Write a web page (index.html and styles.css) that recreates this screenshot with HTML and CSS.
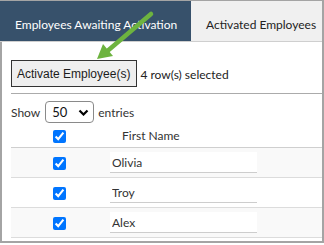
FILE: index.html
```html
<!DOCTYPE html>
<html>
  <head>
    <title>Employee Activation</title>
    <link rel="stylesheet" href="styles.css">
  </head>
  <body>
    <div class="frame">
      <div class="tabs">
        <div class="tab active">Employees Awaiting Activation</div>
        <div class="tab">Activated Employees</div>
      </div>
      <div class="panel">
        <div class="toolbar">
          <button class="btn">Activate Employee(s)</button>
          <span class="count">4 row(s) selected</span>
        </div>
        <div class="length">
          <span>Show</span>
          <div class="select-wrap">
            <select>
              <option>50</option>
            </select>
            <svg class="chevron" width="11" height="7" viewBox="0 0 11 7">
              <polyline points="1.5,1.5 5.5,5.5 9.5,1.5" fill="none" stroke="#000" stroke-width="2.2" />
            </svg>
          </div>
          <span>entries</span>
        </div>
        <table class="grid">
          <thead>
            <tr>
              <th class="check"><input type="checkbox" checked /></th>
              <th class="name">First Name</th>
            </tr>
          </thead>
          <tbody>
            <tr class="odd">
              <td class="check"><input type="checkbox" checked /></td>
              <td><input type="text" class="field" value="Olivia" /></td>
            </tr>
            <tr>
              <td class="check"><input type="checkbox" checked /></td>
              <td><input type="text" class="field" value="Troy" /></td>
            </tr>
            <tr class="odd">
              <td class="check"><input type="checkbox" checked /></td>
              <td><input type="text" class="field" value="Alex" /></td>
            </tr>
          </tbody>
        </table>
      </div>
      <svg class="arrow" width="324" height="70" viewBox="0 0 324 70">
        <line x1="149" y1="13" x2="106" y2="49.5" stroke="#6db33f" stroke-width="4.5" stroke-linecap="round" />
        <polygon points="95,58 111,55 101,43" fill="#6db33f" />
      </svg>
    </div>
  </body>
</html>
```

FILE: styles.css
```css
body{
    margin: 0;
    font-family: Lato, "Open Sans", sans-serif;
    font-size: 12px;
    color: #333;
}
.frame{
    position: relative;
    width: 320px;
    border: 2px solid #a4a4a4;
    border-top-width: 1px;
    padding-bottom: 3px;
}
.tabs{
    display: flex;
    height: 40px;
    margin-left: -2px;
    border-bottom: 1px solid #cfcfcf;
}
.tab{
    display: flex;
    align-items: center;
    padding: 6px 0 0 15px;
    box-sizing: border-box;
    background: #f0f0f0;
    color: #222;
    flex: 1;
}
.tab.active{
    flex: 0 0 191px;
    background: #37516b;
    color: #fff;
}
.panel{
    padding-left: 9px;
}
.toolbar{
    display: flex;
    align-items: center;
    gap: 3px;
    margin-top: 18px;
    padding-bottom: 6px;
    border-bottom: 1px solid #ababab;
}
.btn{
    height: 27px;
    padding: 0 6px 0 5px;
    font: 12px "Liberation Sans", Arial, sans-serif;
    color: #1c1c1c;
    background: #efefef;
    border: 1px solid #333;
    border-radius: 0;
}
.count{
    color: #222;
    padding-top: 2px;
}
.length{
    display: flex;
    align-items: center;
    gap: 5px;
    margin-top: 7px;
    height: 22px;
}
.select-wrap{
    position: relative;
    height: 22px;
    margin-right: -1px;
}
.select-wrap select{
    appearance: none;
    width: 49px;
    height: 22px;
    padding: 0 0 0 6px;
    font: 13px Lato, "Open Sans", sans-serif;
    color: #111;
    background: #fff;
    border: 1px solid #8a8a8a;
    border-radius: 4px;
}
.chevron{
    position: absolute;
    right: 5px;
    top: 8px;
}
.grid{
    width: 100%;
    border-collapse: collapse;
}
.grid th{
    height: 24px;
    padding: 0;
    font-weight: normal;
    text-align: left;
    border-bottom: 1px solid #cfcfcf;
}
.grid td{
    height: 29px;
    padding: 0 0 0 3px;
    border-bottom: 1px solid #dcdcdc;
}
.grid .check{
    width: 96px;
    padding: 0;
    text-align: center;
}
.grid th.name{
    padding-left: 15px;
}
.grid tr.odd td{
    background: #f9f9f9;
}
.check input{
    margin: 0;
    vertical-align: middle;
}
.field{
    width: 147px;
    height: 21px;
    box-sizing: border-box;
    padding: 0 0 0 2px;
    font: 12px Lato, "Open Sans", sans-serif;
    color: #333;
    background: #fff;
    border: 0;
    border-bottom: 1px solid #cdcdcd;
    outline: none;
}
.arrow{
    position: absolute;
    left: 0;
    top: 0;
    pointer-events: none;
}
```
